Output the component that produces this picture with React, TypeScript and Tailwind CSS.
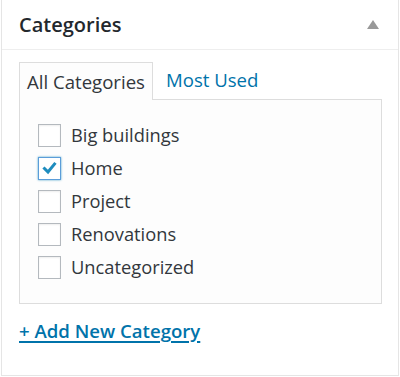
import { useState } from "react";

const categories = [
  { id: 1, label: "Big buildings", checked: false },
  { id: 2, label: "Home", checked: true },
  { id: 3, label: "Project", checked: false },
  { id: 4, label: "Renovations", checked: false },
  { id: 5, label: "Uncategorized", checked: false },
];

function Checkbox({ checked }: { checked: boolean }) {
  return (
    <span
      className={
        checked
          ? "flex h-[23px] w-[23px] items-center justify-center border border-[#5b9dd9] bg-white shadow-[0_0_2px_rgba(30,140,190,0.8)]"
          : "flex h-[23px] w-[23px] items-center justify-center border border-[#b4b9be] bg-white shadow-[inset_0_1px_2px_rgba(0,0,0,0.07)]"
      }
    >
      {checked ? (
        <svg viewBox="0 0 21 21" className="h-[21px] w-[21px]" fill="none">
          <path
            d="M5.5 10.5l3.5 3.5 6.5-8"
            stroke="#1e8cbe"
            strokeWidth={3}
            strokeLinecap="square"
            strokeLinejoin="miter"
          />
        </svg>
      ) : null}
    </span>
  );
}

export default function App() {
  const [tab, setTab] = useState<"all" | "pop">("all");

  return (
    <div className="h-[377px] w-[400px] bg-white font-['Open_Sans',sans-serif] text-[#32373c]">
      <div className="ml-px h-[376px] w-[398px] border-x border-b border-[#e5e5e5] bg-white">
        <div className="flex h-[50px] items-center justify-between border-b border-[#eeeeee] pl-[17px] pr-[19px]">
          <h2 className="pt-px text-[20px] font-semibold leading-none text-[#23282d]">Categories</h2>
          <svg viewBox="0 0 12 9" className="h-[9px] w-[12px]" fill="#999999">
            <path d="M6 0L12 9H0z" />
          </svg>
        </div>

        <div className="px-[17px] pt-[12px]">
          <ul className="flex h-[37px] items-end">
            <li
              className={
                tab === "all"
                  ? "relative z-10 -mb-px flex h-[38px] items-center border border-b-0 border-[#dddddd] bg-[#fdfdfd] px-[7px] text-[18.6px] text-[#32373c]"
                  : "flex h-[38px] items-center px-[7px] text-[18.6px] text-[#0073aa]"
              }
              onClick={() => setTab("all")}
            >
              All Categories
            </li>
            <li
              className={
                tab === "pop"
                  ? "relative z-10 -mb-px flex h-[38px] items-center border border-b-0 border-[#dddddd] bg-[#fdfdfd] px-[13px] text-[18.6px] text-[#32373c]"
                  : "flex h-[38px] items-center px-[13px] text-[18.6px] text-[#0073aa]"
              }
              onClick={() => setTab("pop")}
            >
              Most Used
            </li>
          </ul>

          <div className="h-[205px] w-[363px] border border-[#dddddd] bg-[#fdfdfd] px-[18px] pt-[24px]">
            <ul className="flex flex-col gap-[10px]">
              {categories.map((c) => (
                <li key={c.id} className="flex h-[23px] items-center gap-[10px] text-[18.3px]">
                  <Checkbox checked={c.checked} />
                  <span className="leading-none">{c.label}</span>
                </li>
              ))}
            </ul>
          </div>

          <div className="pt-[13px]">
            <a
              href="#"
              className="text-[18.6px] font-semibold text-[#0073aa] underline decoration-[1.5px] underline-offset-[3px]"
            >
              + Add New Category
            </a>
          </div>
        </div>
      </div>
    </div>
  );
}
